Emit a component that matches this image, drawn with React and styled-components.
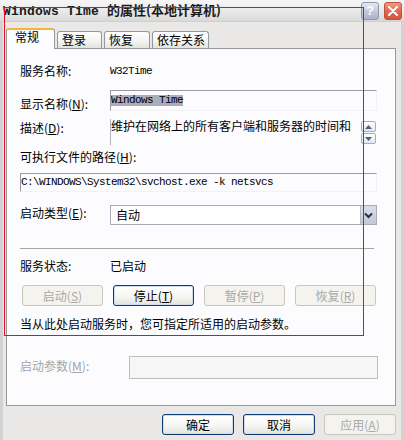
import React from 'react';
import styled, { createGlobalStyle } from 'styled-components';

const GlobalStyle = createGlobalStyle`
  html, body { margin: 0; padding: 0; background: #E9E8E6; }
  body {
    font-family: "Noto Sans CJK SC", "Noto Sans", sans-serif;
    font-size: 12px;
    color: #000;
  }
  * { box-sizing: border-box; }
`;

const CJK = `"Noto Sans CJK SC", "Noto Sans", sans-serif`;
const MONO = `"Liberation Mono", "DejaVu Sans Mono", monospace`;

const Window = styled.div`
  position: relative;
  width: 404px;
  height: 440px;
  background: #E9E8E6;
  display: flex;
  flex-direction: column;
  overflow: hidden;
`;

const TitleBar = styled.div`
  height: 22px;
  flex: none;
  display: flex;
  align-items: center;
  padding: 0 2px 0 3px;
  background: linear-gradient(#F6F6F6 0%, #E9E9E9 55%, #D9D9D9 100%);
  border-bottom: 1px solid #CFCFCF;
`;

const TitleText = styled.div`
  flex: 1;
  font-weight: bold;
  font-size: 13px;
  line-height: 16px;
  color: #1A1A1A;
  white-space: nowrap;
`;

const TitleLatin = styled.span`
  font-family: ${MONO};
  letter-spacing: 0.2px;
`;

const TitleCJK = styled.span`
  font-family: ${CJK};
`;

const CaptionButton = styled.div`
  width: 18px;
  height: 18px;
  margin-left: ${p => p.$ml || 0}px;
  border-radius: 3px;
  display: flex;
  align-items: center;
  justify-content: center;
  border: 1px solid ${p => (p.$close ? '#C0503C' : '#8D97AE')};
  background: ${p =>
    p.$close
      ? 'linear-gradient(#F19A86 0%, #E06A52 50%, #D2553D 100%)'
      : 'linear-gradient(#E3E8F1 0%, #C3CADA 50%, #AAB3C7 100%)'};
  color: #fff;
  font: bold 13px "Liberation Sans", sans-serif;
`;

const Body = styled.div`
  flex: 1;
  display: flex;
  flex-direction: column;
  padding: 6px 5px 0 3px;
  border-left: 3px solid #D2D2D2;
  border-right: 3px solid #D2D2D2;
`;

const TabStrip = styled.div`
  display: flex;
  align-items: flex-start;
  height: 21px;
  margin-bottom: -1px;
  position: relative;
  z-index: 1;
`;

const Tab = styled.div`
  width: ${p => p.$w}px;
  margin-left: ${p => p.$ml || 0}px;
  margin-top: ${p => (p.$active ? 0 : 3)}px;
  height: ${p => (p.$active ? 21 : 17)}px;
  padding-left: ${p => p.$pl}px;
  padding-top: ${p => (p.$active ? 0 : 1)}px;
  border: 1px solid #919B9C;
  border-bottom: none;
  border-top: ${p => (p.$active ? '2px solid #F3B33D' : '1px solid #919B9C')};
  border-radius: 3px 3px 0 0;
  background: ${p => (p.$active ? '#FCFCFE' : 'linear-gradient(#FFFFFF 0%, #F3F3F1 60%, #E3E2DC 100%)')};
  line-height: 14px;
  font-size: 12px;
  white-space: nowrap;
`;

const Panel = styled.div`
  height: 358px;
  border: 1px solid #919B9C;
  background: #FCFCFE;
  padding: 0 18px 0 13px;
  display: flex;
  flex-direction: column;
`;

const Row = styled.div`
  display: grid;
  grid-template-columns: ${p => p.$label || 90}px 1fr;
  align-items: ${p => p.$align || 'start'};
  margin-top: ${p => p.$mt || 0}px;
  height: ${p => (p.$h ? `${p.$h}px` : 'auto')};
`;

const Label = styled.div`
  line-height: 14px;
  padding-top: ${p => p.$pt || 0}px;
  color: ${p => (p.$disabled ? '#A4A4A4' : '#000')};
  white-space: nowrap;
`;

const MonoValue = styled.div`
  font-family: ${MONO};
  font-size: 11px;
  letter-spacing: -0.6px;
  line-height: 14px;
  color: #000;
  white-space: nowrap;
`;

const EditBox = styled.div`
  height: ${p => p.$h}px;
  margin-top: ${p => p.$mt || 0}px;
  border-top: 1px solid #9C9C9C;
  border-left: 1px solid #9C9C9C;
  border-right: 1px solid #F2F2F2;
  border-bottom: 1px solid #F2F2F2;
  padding-top: ${p => p.$pt || 0}px;
  padding-left: ${p => p.$pl || 0}px;
  font-family: ${MONO};
  font-size: 11px;
  letter-spacing: -0.6px;
  line-height: ${p => p.$lh || 14}px;
  white-space: nowrap;
  overflow: hidden;
`;

const Selected = styled.span`
  display: inline-block;
  background: #ABADB8;
  line-height: 11px;
  height: 11px;
`;

const DescWrap = styled.div`
  display: flex;
  height: 26px;
`;

const DescText = styled.div`
  flex: 1;
  min-width: 0;
  border-left: 1px solid #B4B4B4;
  line-height: 14px;
  white-space: nowrap;
`;

const ScrollCol = styled.div`
  width: 15px;
  flex: none;
  margin-left: 2px;
  margin-right: 1px;
  padding-top: 2px;
  display: flex;
  flex-direction: column;
  gap: 1px;
`;

const ScrollBtn = styled.div`
  height: 11px;
  border: 1px solid #A7AEC0;
  border-radius: 2px;
  background: linear-gradient(#FFFFFF, #E3E6EF);
  display: flex;
  align-items: center;
  justify-content: center;
`;

const Combo = styled.div`
  height: 20px;
  border: 1px solid #A5ACB5;
  background: #fff;
  display: flex;
  align-items: stretch;
`;

const ComboText = styled.div`
  flex: 1;
  padding-left: 5px;
  line-height: 18px;
`;

const ComboButton = styled.div`
  width: 16px;
  border-left: 1px solid #B7BCCB;
  background: linear-gradient(#DADCE8 0%, #C5C8D8 100%);
  display: flex;
  align-items: center;
  justify-content: center;
`;

const Separator = styled.div`
  height: 1px;
  background: #A7A6A2;
  margin-top: ${p => p.$mt}px;
  margin-right: 3px;
`;

const Line = styled.div`
  line-height: 14px;
  margin-top: ${p => p.$mt}px;
  white-space: nowrap;
`;

const ButtonRow = styled.div`
  display: grid;
  grid-template-columns: repeat(4, 81px);
  gap: 10px;
  margin-top: ${p => p.$mt}px;
  margin-left: 2px;
`;

const Button = styled.div`
  width: ${p => (p.$w ? `${p.$w}px` : 'auto')};
  height: 21px;
  border: 1px solid ${p => (p.$disabled ? '#C9C7BA' : '#0E3B72')};
  border-radius: 3px;
  background: ${p =>
    p.$disabled
      ? '#F4F3EE'
      : 'linear-gradient(#FFFFFF 0%, #F6F6F3 55%, #E4E2DA 100%)'};
  box-shadow: ${p => (p.$disabled ? 'none' : 'inset 0 0 0 1px #CFDDF2')};
  color: ${p => (p.$disabled ? '#A9A9A9' : '#000')};
  display: flex;
  align-items: center;
  justify-content: center;
  font-size: 12px;
  line-height: 14px;
  white-space: nowrap;
`;

const ParamBox = styled.div`
  height: 23px;
  border: 1px solid #BDBDBD;
  background: #F6F6F4;
  margin-right: -1px;
`;

const Footer = styled.div`
  display: flex;
  justify-content: flex-end;
  gap: 9px;
  margin-top: 8px;
`;

const Annotation = styled.div`
  position: absolute;
  left: 4px;
  top: 7px;
  width: 360px;
  height: 329px;
  border: 1px solid #E0102A;
  pointer-events: none;
`;

const Key = ({ k }) => (
  <>
    (<u>{k}</u>)
  </>
);

const UpArrow = () => (
  <svg width="7" height="4" viewBox="0 0 7 4">
    <path d="M0 4 L3.5 0 L7 4 Z" fill="#4D6185" />
  </svg>
);

const DownArrow = () => (
  <svg width="7" height="4" viewBox="0 0 7 4">
    <path d="M0 0 L3.5 4 L7 0 Z" fill="#4D6185" />
  </svg>
);

const Chevron = () => (
  <svg width="9" height="7" viewBox="0 0 9 7">
    <path d="M1 1.5 L4.5 5 L8 1.5" fill="none" stroke="#2A2F3E" strokeWidth="2" />
  </svg>
);

const CloseGlyph = () => (
  <svg width="10" height="10" viewBox="0 0 10 10">
    <path d="M1 1 L9 9 M9 1 L1 9" stroke="#fff" strokeWidth="2" strokeLinecap="round" />
  </svg>
);

export default function App() {
  return (
    <>
      <GlobalStyle />
      <Window>
        <TitleBar>
          <TitleText>
            <TitleLatin>Windows Time </TitleLatin>
            <TitleCJK>的属性(本地计算机)</TitleCJK>
          </TitleText>
          <CaptionButton>?</CaptionButton>
          <CaptionButton $close $ml={5}>
            <CloseGlyph />
          </CaptionButton>
        </TitleBar>
        <Body>
          <TabStrip>
            <Tab $active $w={49} $pl={8}>常规</Tab>
            <Tab $w={45} $ml={2} $pl={4}>登录</Tab>
            <Tab $w={46} $ml={2} $pl={4}>恢复</Tab>
            <Tab $w={57} $ml={2} $pl={4}>依存关系</Tab>
          </TabStrip>
          <Panel>
            <Row $mt={12} $h={20} $align="center">
              <Label>服务名称:</Label>
              <MonoValue>W32Time</MonoValue>
            </Row>
            <Row $mt={9}>
              <Label $pt={7}>
                显示名称<Key k="N" />:
              </Label>
              <EditBox $h={21} $pt={2}>
                <Selected>Windows Time</Selected>
              </EditBox>
            </Row>
            <Row $mt={8}>
              <Label $pt={2}>
                描述<Key k="D" />:
              </Label>
              <DescWrap>
                <DescText>维护在网络上的所有客户端和服务器的时间和</DescText>
                <ScrollCol>
                  <ScrollBtn>
                    <UpArrow />
                  </ScrollBtn>
                  <ScrollBtn>
                    <DownArrow />
                  </ScrollBtn>
                </ScrollCol>
              </DescWrap>
            </Row>
            <Line $mt={5}>
              可执行文件的路径<Key k="H" />:
            </Line>
            <EditBox $h={19} $mt={9} $pt={1} $lh={14}>
              C:\WINDOWS\System32\svchost.exe -k netsvcs
            </EditBox>
            <Row $mt={13}>
              <Label $pt={1}>
                启动类型<Key k="E" />:
              </Label>
              <Combo>
                <ComboText>自动</ComboText>
                <ComboButton>
                  <Chevron />
                </ComboButton>
              </Combo>
            </Row>
            <Separator $mt={23} />
            <Row $mt={10}>
              <Label>服务状态:</Label>
              <Label>已启动</Label>
            </Row>
            <ButtonRow $mt={12}>
              <Button $disabled>
                启动<Key k="S" />
              </Button>
              <Button>
                停止<Key k="T" />
              </Button>
              <Button $disabled>
                暂停<Key k="P" />
              </Button>
              <Button $disabled>
                恢复<Key k="R" />
              </Button>
            </ButtonRow>
            <Line $mt={11}>当从此处启动服务时，您可指定所适用的启动参数。</Line>
            <Row $mt={25} $label={109}>
              <Label $pt={3} $disabled>
                启动参数<Key k="M" />:
              </Label>
              <ParamBox />
            </Row>
          </Panel>
          <Footer>
            <Button $w={72}>确定</Button>
            <Button $w={72}>取消</Button>
            <Button $w={72} $disabled>
              应用<Key k="A" />
            </Button>
          </Footer>
        </Body>
        <Annotation />
      </Window>
    </>
  );
}
